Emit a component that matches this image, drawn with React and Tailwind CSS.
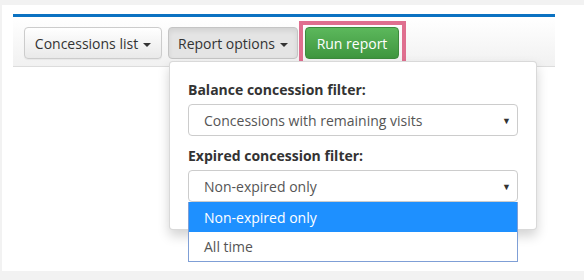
import React from 'react';

const Caret = () => (
  <span className="inline-block ml-[5px] align-middle w-0 h-0 border-x-[4px] border-x-transparent border-t-[4px] border-t-[#333]" />
);

const SelectBox = ({ value, open }) => (
  <div
    className={`h-[32px] flex items-center justify-between pl-[15px] pr-[6px] bg-white border border-[#ccc] text-[14px] text-[#555] ${
      open ? 'rounded-t-[4px]' : 'rounded-[4px]'
    }`}
  >
    <span>{value}</span>
    <span className="text-[9px] text-[#333] leading-none">▼</span>
  </div>
);

const App = () => {
  return (
    <div
      className="w-[584px] h-[280px] bg-[#f2f2f2] pt-[5px] pl-[2px] overflow-hidden"
      style={{ fontFamily: '"Open Sans", "Liberation Sans", sans-serif' }}
    >
      <div className="w-[582px] h-[266px] bg-white pt-[9px] pl-[11px]">
        <div className="w-[542px] border-t-[3px] border-t-[#0b72c2] border-b border-b-[#dcdcdc] bg-gradient-to-b from-white to-[#f1f1f1] pt-[10px] pb-[7px] pl-[11px]">
          <div className="flex items-center">
            <button className="h-[32px] w-[138px] rounded-[4px] border border-[#ccc] bg-gradient-to-b from-white to-[#e9e9e9] text-[14px] text-[#333] shadow-[inset_0_1px_0_rgba(255,255,255,0.15),0_1px_1px_rgba(0,0,0,0.05)]">
              Concessions list
              <Caret />
            </button>

            <div className="relative ml-[6px]">
              <button className="h-[32px] w-[130px] rounded-[4px] border border-[#c4c4c4] bg-[#e4e4e4] text-[14px] text-[#333] shadow-[inset_0_3px_5px_rgba(0,0,0,0.08)]">
                Report options
                <Caret />
              </button>

              <div className="absolute left-[1px] top-[34px] w-[368px] h-[169px] bg-white border border-[rgba(0,0,0,0.15)] rounded-[4px] shadow-[0_6px_12px_rgba(0,0,0,0.175)] z-10 px-[18px] pt-[18px]">
                <div className="text-[14px] leading-[20px] font-bold text-[#333] mb-[4px]">
                  Balance concession filter:
                </div>
                <SelectBox value="Concessions with remaining visits" />
                <div className="text-[14px] leading-[20px] font-bold text-[#333] mt-[10px] mb-[4px]">
                  Expired concession filter:
                </div>
                <div className="relative">
                  <SelectBox value="Non-expired only" />
                  <div className="absolute left-0 right-0 top-full bg-white border border-t-0 border-[#7f9fd6] text-[14px]">
                    <div className="h-[30px] flex items-center pl-[15px] bg-[#1e90ff] text-white">
                      Non-expired only
                    </div>
                    <div className="h-[29px] flex items-center pl-[15px] text-[#555]">All time</div>
                  </div>
                </div>
              </div>
            </div>

            <div className="ml-[1px] border-[4px] border-[#df6f8f] py-[2px] pl-[2px] pr-[3px] -my-[6px]">
              <button className="h-[32px] w-[94px] rounded-[4px] border border-[#3d8b3d] bg-gradient-to-b from-[#5cb85c] to-[#3f963f] text-[14px] text-white">
                Run report
              </button>
            </div>
          </div>
        </div>
      </div>
    </div>
  );
};

export default App;
